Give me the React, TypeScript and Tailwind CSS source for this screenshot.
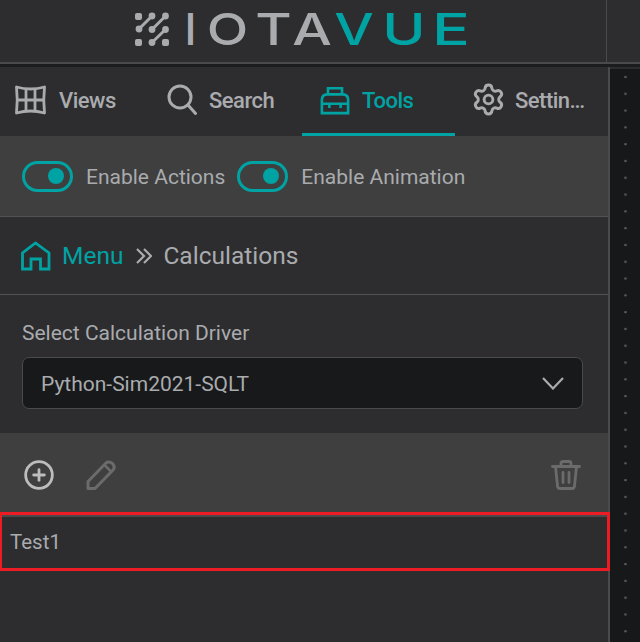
import React from 'react';
import { Settings, CirclePlus } from 'lucide-react';

const LogoMark = () => (
  <svg width="36" height="34" viewBox="0 0 36 34" fill="#a9abae" stroke="#a9abae" strokeLinecap="round">
    <rect x="1" y="1" width="7" height="7" rx="2" strokeWidth="0" />
    <rect x="1" y="27" width="7" height="7" rx="2" strokeWidth="0" />
    <rect x="28" y="27" width="7" height="7" rx="2" strokeWidth="0" />
    <circle cx="18" cy="4" r="3.4" strokeWidth="0" />
    <circle cx="5" cy="17" r="3.4" strokeWidth="0" />
    <path d="M18 4 L5 17" strokeWidth="3" />
    <circle cx="31.5" cy="4" r="3.4" strokeWidth="0" />
    <circle cx="18" cy="17.5" r="3.4" strokeWidth="0" />
    <path d="M31.5 4 L18 17.5" strokeWidth="3" />
    <circle cx="31.5" cy="17.5" r="3.4" strokeWidth="0" />
    <circle cx="18" cy="30.5" r="3.4" strokeWidth="0" />
    <path d="M31.5 17.5 L18 30.5" strokeWidth="3" />
  </svg>
);

const Wordmark = () => (
  <div className="flex items-center h-[32px] text-[44px] font-medium leading-none font-['Inter',sans-serif] text-[#a9abae]">
    <span className="w-[6px] ml-[18px] flex justify-center">I</span>
    <span className="w-[37px] ml-[15px] flex justify-center scale-x-[1.23]">O</span>
    <span className="w-[33px] ml-[11px] flex justify-center scale-x-[1.27]">T</span>
    <span className="w-[38px] ml-[3px] flex justify-center scale-x-[1.27]">A</span>
    <span className="w-[38px] ml-[4px] flex justify-center text-[#00a3a3] scale-x-[1.27]">V</span>
    <span className="w-[36px] ml-[13px] flex justify-center text-[#00a3a3] scale-x-[1.33]">U</span>
    <span className="w-[32px] ml-[13px] flex justify-center text-[#00a3a3] scale-x-[1.43]">E</span>
  </div>
);

const ViewsIcon = () => (
  <svg width="33" height="32" viewBox="0 0 33 32" fill="none" stroke="currentColor" strokeWidth="2.8" strokeLinejoin="round">
    <path d="M2.5 3 Q16.5 7 30.5 3 Q29 16 30.5 29 Q16.5 25 2.5 29 Q4 16 2.5 3Z" />
    <path d="M12 5 V27 M21 5 V27 M3.5 16 H29.5" />
  </svg>
);

const SearchIcon = () => (
  <svg width="30" height="32" viewBox="0 0 30 32" fill="none" stroke="currentColor" strokeWidth="3" strokeLinecap="round">
    <circle cx="13" cy="13" r="11" />
    <path d="M21 21 L28.5 29.5" />
  </svg>
);

const ToolboxIcon = () => (
  <svg width="30" height="32" viewBox="0 0 32 32" fill="none" stroke="currentColor" strokeWidth="2.8">
    <path d="M2 30 V16 Q2 10 8 10 H24 Q30 10 30 16 V30 Z" />
    <path d="M8.5 10 V3.5 H23.5 V10" />
    <path d="M2 20 H30 M10 20 V24.5 M22 20 V24.5" />
  </svg>
);

const Toggle = () => (
  <div className="w-[51px] h-[31px] rounded-full border-[3.5px] border-[#00a3a3] flex items-center justify-end pr-[6px]">
    <div className="w-[16px] h-[16px] rounded-full bg-[#00a3a3]" />
  </div>
);

const tabs = [
  { label: 'Views', icon: <ViewsIcon /> },
  { label: 'Search', icon: <SearchIcon /> },
  { label: 'Tools', icon: <ToolboxIcon />, active: true },
  { label: 'Settin…', icon: <Settings size={35} strokeWidth={2} className="-mx-[2.5px]" /> },
];

const App: React.FC = () => {
  return (
    <div className="w-[640px] h-[642px] overflow-hidden flex flex-col bg-[#2d2d2f] text-[#a9abae] font-['Roboto',sans-serif]">
      {/* top bar */}
      <div className="h-[67px] shrink-0 border-b-[3px] border-b-[#1b1c1e] relative">
        <div className="h-[64px] border-b-2 border-[#4a4a4c]">
          <div className="w-[607px] h-full border-r border-[#4a4a4c] flex items-center justify-center gap-0 pb-[4px] pr-[6px]">
            <LogoMark />
            <Wordmark />
          </div>
        </div>
      </div>

      <div className="flex-1 flex min-h-0">
        <div className="w-[610px] shrink-0 border-r-2 border-[#4a4a4c] flex flex-col">
          {/* tabs */}
          <div className="h-[69px] shrink-0 flex -ml-[4px]">
            {tabs.map((t) => (
              <div
                key={t.label}
                className={`w-[153px] shrink-0 flex items-center gap-[12px] pl-[18px] text-[22px] font-medium tracking-[-0.5px] border-b-[3px] ${
                  t.active ? 'border-[#00a3a3] text-[#00a3a3]' : 'border-transparent'
                }`}
              >
                <div className="-mt-[1px]">{t.icon}</div>
                <span>{t.label}</span>
              </div>
            ))}
          </div>

          {/* switches */}
          <div className="h-[81px] shrink-0 bg-[#3f3f3f] border-b border-[#525254] flex items-center pl-[22px] text-[21px]">
            <Toggle />
            <span className="ml-[13px] mr-[12px] pt-[3px]">Enable Actions</span>
            <Toggle />
            <span className="ml-[13px] pt-[3px]">Enable Animation</span>
          </div>

          {/* breadcrumb */}
          <div className="h-[78px] shrink-0 border-b border-[#525254] flex items-center pl-[21px] text-[24.5px]">
            <svg width="30" height="30" viewBox="0 0 30 30" fill="none" stroke="#00a3a3" strokeWidth="2.8">
              <path d="M1.5 28 V12 L14.5 2 L28 12 V28 H19.5 V18 H10 V28 Z" />
            </svg>
            <span className="ml-[11px] pt-[2px] text-[#00a3a3]">Menu</span>
            <svg className="ml-[13px]" width="16" height="16" viewBox="0 0 16 16" fill="none" stroke="currentColor" strokeWidth="2.2">
              <path d="M1 1 L8 8 L1 15 M8 1 L15 8 L8 15" />
            </svg>
            <span className="ml-[11px] pt-[2px]">Calculations</span>
          </div>

          {/* driver select */}
          <div className="h-[138px] shrink-0 px-[22px] pt-[25px] pr-[25px]">
            <div className="text-[21px] leading-[26px]">Select Calculation Driver</div>
            <div className="mt-[11px] h-[52px] bg-[#18191b] border border-[#4a4a4c] rounded-[7px] flex items-center justify-between pl-[18px] pr-[18px] text-[21px]">
              <span className="pt-[3px]">Python-Sim2021-SQLT</span>
              <svg width="22" height="13" viewBox="0 0 22 13" fill="none" stroke="currentColor" strokeWidth="2.2">
                <path d="M1 1 L11 11.5 L21 1" />
              </svg>
            </div>
          </div>

          {/* actions */}
          <div className="h-[79px] shrink-0 bg-[#3f3f3f] flex items-center pl-[23px] pr-[27px] pt-[4px]">
            <CirclePlus size={32} strokeWidth={2.1} className="text-[#bdbdbd]" />
            <svg className="ml-[31px]" width="30" height="30" viewBox="0 0 30 30" fill="none" stroke="#6b6b6b" strokeWidth="3" strokeLinejoin="round">
              <path d="M2 28.5 V21.5 L20 3 Q23 0.8 26.5 3.5 Q29.5 7 27 10 L9 28.5 Z" />
              <path d="M18.5 5 L25.5 12" strokeWidth="2.5" />
            </svg>
            <svg className="ml-auto" width="30" height="30" viewBox="0 0 30 30" fill="none" stroke="#6b6b6b" strokeWidth="2.8" strokeLinecap="round" strokeLinejoin="round">
              <path d="M1.5 6.5 H28.5" />
              <path d="M10 6.5 V3.5 Q10 1.5 12 1.5 H18 Q20 1.5 20 3.5 V6.5" />
              <path d="M4.5 6.5 L6.5 26 Q6.8 28.5 9 28.5 H21 Q23.2 28.5 23.5 26 L25.5 6.5" />
              <path d="M12 12.5 V22.5 M18 12.5 V22.5" />
            </svg>
          </div>

          {/* list */}
          <div className="w-[611px] h-[59px] shrink-0 border-[3px] border-l-2 border-r-[4px] border-[#ed1c24]">
            <div className="h-full border-t-2 border-[#4a4a4c] flex items-center pl-[8px] text-[20.5px]">Test1</div>
          </div>
        </div>

        {/* canvas */}
        <div className="flex-1 border-t-2 border-[#2d2d2f] bg-[#17181a] bg-[radial-gradient(circle_at_15.5px_8px,#55565a_0,#55565a_1px,transparent_1.5px)] bg-[length:30px_16.8px]" />
      </div>
    </div>
  );
};

export default App;
